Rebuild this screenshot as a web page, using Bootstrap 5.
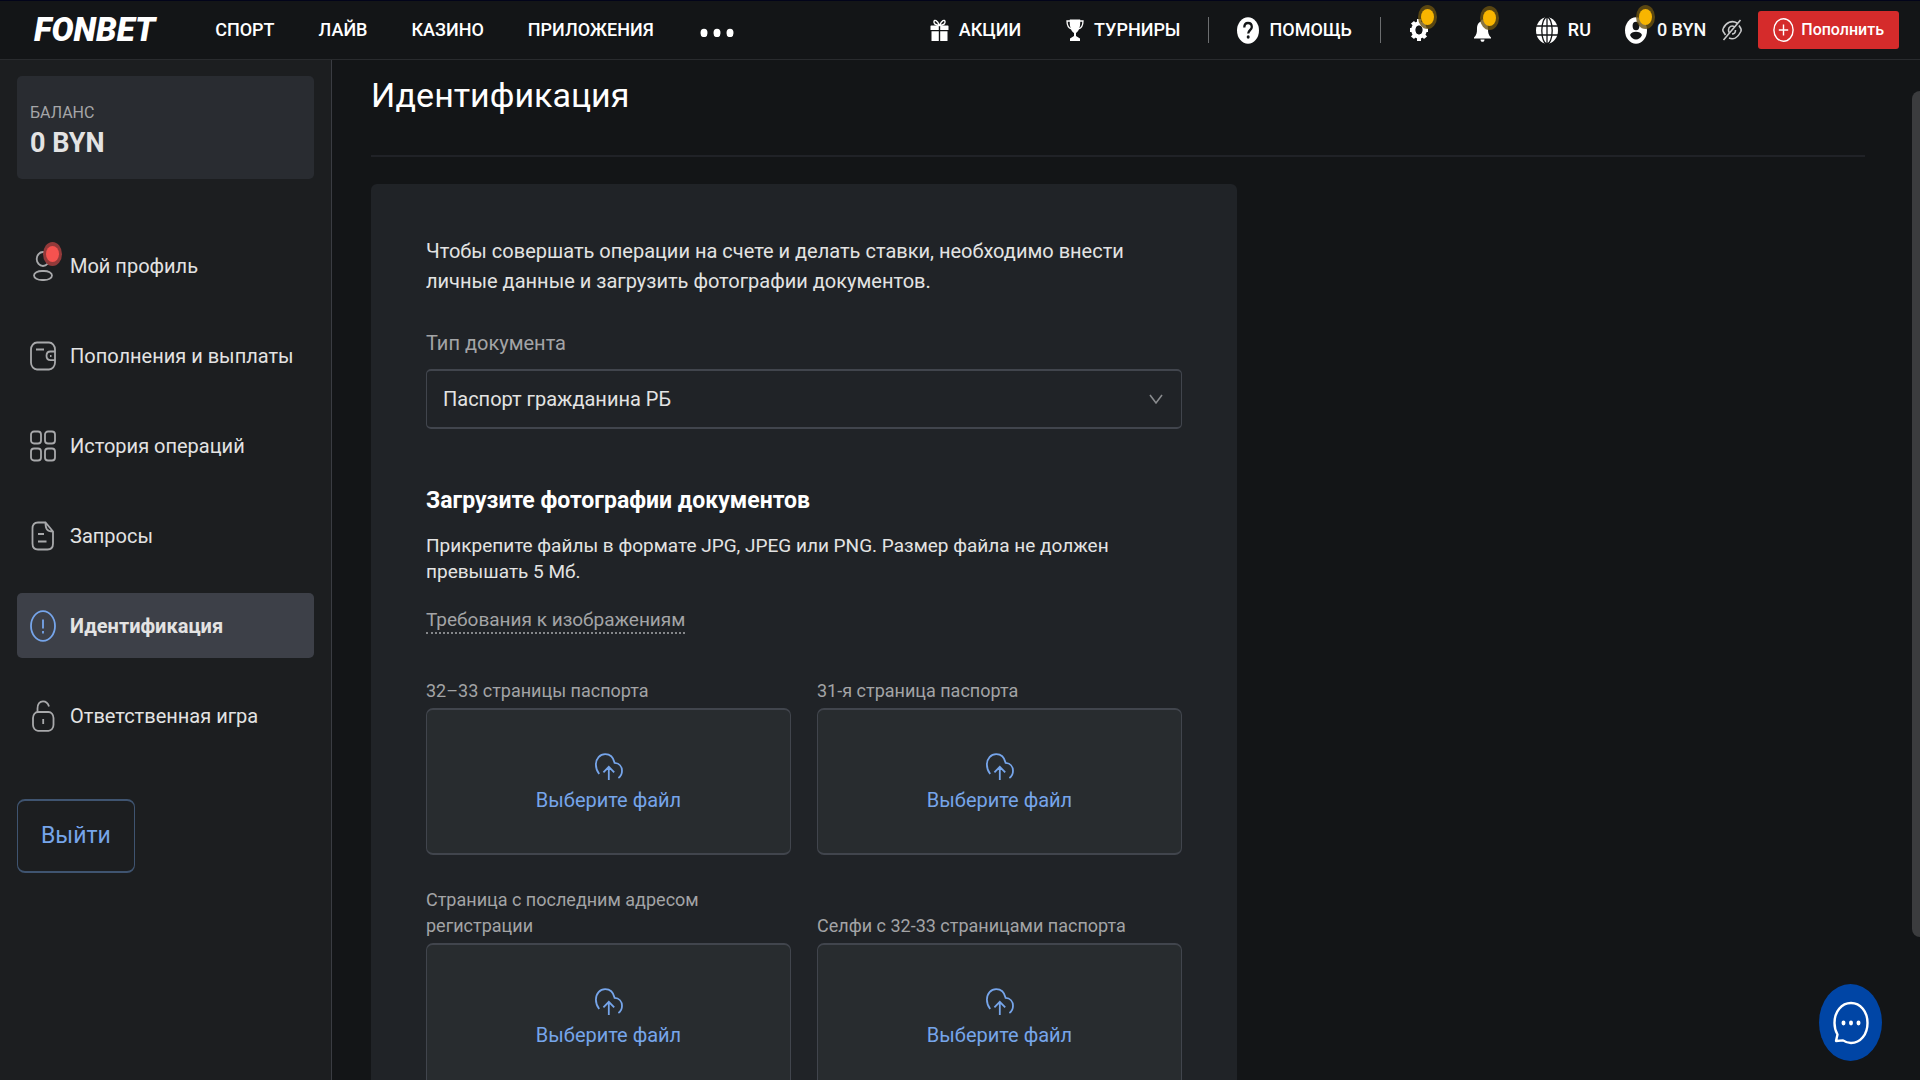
<!DOCTYPE html>
<html lang="ru" data-bs-theme="dark">
<head>
<meta charset="utf-8">
<meta name="viewport" content="width=device-width, initial-scale=1">
<title>Идентификация</title>
<link href="https://cdn.jsdelivr.net/npm/bootstrap@5.3.0/dist/css/bootstrap.min.css" rel="stylesheet">
<style>
body{font-family:Roboto,"Liberation Sans",sans-serif;background:#131517;color:#e3e3e3;font-size:20px;line-height:30px}
a{color:inherit;text-decoration:none}
svg{flex:none;display:block}
.topbar{height:60px;border-top:1px solid #02041a;border-bottom:1px solid #292b2e;background:#131517;color:#fff;font-size:18px;line-height:24px;font-weight:500;padding:0 21px 0 34px}
.brand{font-size:33px;line-height:36px;font-weight:900;font-style:italic;margin-right:60px}
.main-links{gap:44px}
.tool{gap:10px}
.plain{background:none;border:0;padding:0;color:inherit;font-weight:inherit}
.gap-wide{margin-left:45px}
.gap-mid{margin-left:28px}
.gap-user{margin-left:34px}
.vline{width:1px;height:26px;background:#6c6e70;margin-left:28px}
.notify{position:absolute;width:19px;height:24px;border-radius:50%;background:#6b5210cc;display:grid;place-items:center}
.notify::after{content:"";width:13px;height:16px;border-radius:50%;background:#f8b500}
.on-gear{left:9px;top:-13px}
.on-bell{left:6px;top:-12px}
.on-user{left:11px;top:-12px}
.notify-red{left:13px;top:-9px;background:#933a3a}
.notify-red::after{background:#f5524f}
.btn-pay{background:#d52b2b;color:#fff;border-radius:3px;font-size:16px;line-height:24px;font-weight:500;padding:7px 15px;gap:7px;border:0}
.btn-pay:hover{background:#c02424;color:#fff}
.side{width:332px;background:#1c1e20;border-right:1px solid #3a3c42;padding:16px 17px}
.balance{background:#292c31;border-radius:5px;height:103px;padding:24px 13px 0;margin-bottom:54px}
.balance-title{font-size:16px;line-height:26px;color:#a5a6a8}
.balance-sum{font-size:27px;line-height:34px;font-weight:700}
.side-links{gap:25px}
.side-link{height:65px;padding:0 13px;gap:14px;border-radius:5px;color:#e3e3e3;font-size:20px}
.side-link svg{color:#a8a9ab}
.side-link.active{background:#3d4048;font-weight:700}
.side-link.active svg{color:#76a5ea}
.btn-exit{margin-top:51px;height:74px;padding:0 23px;border:2px solid #3f5470;border-left-width:1px;border-right-width:1px;border-radius:8px;color:#76a5ea;font-size:23px}
.content-area{padding:15px 55px 0 39px}
.page-title{font-size:34px;line-height:40px;font-weight:400;padding-bottom:40px;margin-bottom:27px;border-bottom:2px solid #202227}
.panel{background:#202327;border-radius:6px;max-width:866px;padding:52px 55px}
.muted{color:#a3a4a6}
.doc-select{height:60px;background-color:transparent;border:2px solid #41454d;border-left-width:1px;border-right-width:1px;border-radius:5px;color:#e3e3e3;font-size:20px;padding:0 48px 0 16px;margin-top:11px;
background-image:url("data:image/svg+xml,%3Csvg xmlns='http://www.w3.org/2000/svg' viewBox='0 0 16 12' preserveAspectRatio='none'%3E%3Cpath d='M2 2l6 8 6-8' fill='none' stroke='%23898b8e' stroke-width='1.6'/%3E%3C/svg%3E");background-size:16px 12px;background-position:right 17px center}
.upload-title{font-size:23px;line-height:30px;font-weight:700;margin:57px 0 17px}
.note{font-size:19px;line-height:26px;margin-bottom:19px}
.req{font-size:19px;line-height:25px;border-bottom:2px dotted #85878a}
.uploads{--bs-gutter-x:26px;--bs-gutter-y:32px;margin-top:12px}
.up-label{font-size:18px;line-height:26px;margin-bottom:4px;max-width:320px}
.drop{height:147px;background:#282c2f;border:2px solid #41454d;border-left-width:1px;border-right-width:1px;border-radius:7px;color:#76a5ea;cursor:pointer;padding-top:4px}
.chat{position:fixed;right:38px;bottom:19px;width:63px;height:77px;border-radius:50%;border:0;background:#0045a5;color:#fff;padding:0}
.thumb{position:fixed;right:0;top:91px;width:8px;height:846px;border-radius:8px 0 0 8px;background:#3b3c3e}
</style>
</head>
<body class="vh-100 overflow-hidden d-flex flex-column">
<svg class="d-none" aria-hidden="true">
<symbol id="cloud" viewBox="0 0 28 28" preserveAspectRatio="none"><path d="M4.200 21C1.800 18 .9 14.500 .9 11.800 .9 5.500 5 1.200 10.200 1.200c4.800 0 8.200 3.400 9.400 8.600 4.400 .3 7.400 3.600 7.400 8 0 3.300-1.500 5.800-3.600 7.200M13.800 27V14.200M8.400 19.400l5.400-5.600 5.400 5.600" fill="none" stroke="currentColor" stroke-width="1.800"/></symbol>
</svg>
<header class="topbar d-flex align-items-center flex-shrink-0">
<a href="#" class="brand">FONBET</a>
<nav class="main-links d-flex align-items-center">
<a href="#">СПОРТ</a><a href="#">ЛАЙВ</a><a href="#">КАЗИНО</a><a href="#">ПРИЛОЖЕНИЯ</a>
<button class="plain" type="button" aria-label="Ещё"><svg width="36" height="14" viewBox="0 0 36 14" fill="#fff"><ellipse cx="6" cy="10" rx="3.500" ry="4.200"/><ellipse cx="19" cy="10" rx="3.500" ry="4.200"/><ellipse cx="32" cy="10" rx="3.500" ry="4.200"/></svg></button>
</nav>
<div class="d-flex align-items-center ms-auto">
<a href="#" class="tool d-flex align-items-center"><svg width="19" height="22" viewBox="0 0 19 22" fill="#fff"><path d="M1 6.500h7.800V11H.5V7zM10.200 6.500H18l.5.5v4h-8.300zM1.500 12.200h7.300V22h-7a.3.3 0 0 1-.3-.3zM10.200 12.200h7.300v9.500a.3.3 0 0 1-.3.3h-7z"/><path d="M9.500 6.500C7 1.200 4.500.3 4 2.500c-.4 2 1.200 3.700 5.500 4zM9.500 6.500C12 1.200 14.500.3 15 2.500c.4 2-1.200 3.700-5.500 4z" fill="none" stroke="#fff" stroke-width="1.400"/></svg>АКЦИИ</a>
<a href="#" class="tool gap-wide d-flex align-items-center"><svg width="18" height="22" viewBox="0 0 18 22" fill="#fff"><path d="M3.800 .5h10.400c.3 6-.5 11-4.200 13.500v3l4 2.500V22H4v-2.500L8 17v-3C4.300 11.500 3.500 6.500 3.800 .5z"/><path d="M4 2H1c0 4.500 1.500 7 4.500 8M14 2h3c0 4.500-1.500 7-4.500 8" fill="none" stroke="#fff" stroke-width="1.300"/></svg>ТУРНИРЫ</a>
<span class="vline"></span>
<a href="#" class="tool gap-mid d-flex align-items-center"><svg width="22" height="27" viewBox="0 0 22 27"><ellipse cx="11" cy="13.500" rx="11" ry="13.200" fill="#fff"/><path d="M7.300 10.500C7.300 7.500 8.800 6 11 6s3.800 1.600 3.800 4c0 3-3.600 3.400-3.600 6.600" fill="none" stroke="#131517" stroke-width="2.300"/><ellipse cx="11.200" cy="20" rx="1.500" ry="1.800" fill="#131517"/></svg>ПОМОЩЬ</a>
<span class="vline"></span>
<button class="plain gap-mid position-relative" type="button" aria-label="Настройки"><svg width="20" height="24" viewBox="0 0 20 24"><ellipse cx="10" cy="12" rx="5.600" ry="6.600" fill="none" stroke="#fff" stroke-width="4.400"/><path d="M10 1v5M10 18v5M1 12h4M15 12h4M3.500 4.200l3 3.600M13.500 16.200l3 3.600M16.500 4.200l-3 3.600M6.500 16.200l-3 3.600" stroke="#fff" stroke-width="4"/><ellipse cx="10" cy="12" rx="3.400" ry="4.200" fill="#131517"/></svg><span class="notify on-gear"></span></button>
<button class="plain gap-wide position-relative" type="button" aria-label="Уведомления"><svg width="17" height="24" viewBox="0 0 17 24" fill="#fff"><path d="M8.500 1.500c1 0 1.500.8 1.500 2 3.200 1.200 4 4 4 7.500 0 4 .5 6 3 8.500v1H0v-1C2.500 17 3 15 3 11c0-3.500 .8-6.300 4-7.500 0-1.200.5-2 1.500-2zM6.500 21.500h4c0 1.600-.8 2.300-2 2.300s-2-.7-2-2.300z"/></svg><span class="notify on-bell"></span></button>
<a href="#" class="tool gap-wide d-flex align-items-center"><svg width="22" height="27" viewBox="0 0 22 27"><ellipse cx="11" cy="13.500" rx="11" ry="13.200" fill="#fff"/><path d="M0 9h22M0 18h22M11 0v27" stroke="#131517" stroke-width="1.300"/><ellipse cx="11" cy="13.500" rx="5.200" ry="13.500" fill="none" stroke="#131517" stroke-width="1.300"/></svg>RU</a>
<a href="#" class="tool gap-user d-flex align-items-center position-relative"><svg width="22" height="27" viewBox="0 0 22 27"><ellipse cx="11" cy="13.500" rx="11" ry="13.200" fill="#fff"/><ellipse cx="11" cy="9" rx="3.400" ry="4.200" fill="#131517"/><path d="M5 18c1-2.400 3.200-3.200 6-3.200s5 .8 6 3.200c-1.200 3-3.400 4.400-6 4.400S6.200 21 5 18z" fill="#131517"/></svg><span class="notify on-user"></span><span class="text-light">0 BYN</span></a>
<button class="plain mx-3" type="button" aria-label="Скрыть баланс"><svg width="20" height="22" viewBox="0 0 20 22" fill="none" stroke="#c9cacb" stroke-width="1.600"><path d="M15 4C10 .8 4 3.500 1.200 9.500c-.5 1-.4 2 0 3L3.500 16M17 6.500l1.800 3c.5 1 .4 2 0 3C16 18.500 11.500 21 7 19M12.500 8C10 5.800 6.500 7.500 6.500 11c0 1.200.3 2 .8 2.700M13.500 11c0 2.500-1.500 4-3.500 4M18.500 1L1.500 21"/></svg></button>
<button class="btn btn-pay d-flex align-items-center" type="button"><svg width="21" height="24" viewBox="0 0 21 24" fill="none" stroke="#fff" stroke-width="1.400"><ellipse cx="10.500" cy="12" rx="9.600" ry="11.200"/><path d="M10.500 6.500v11M5.800 12h9.400"/></svg>Пополнить</button>
</div>
</header>
<div class="d-flex flex-grow-1 overflow-hidden">
<aside class="side flex-shrink-0">
<div class="balance"><div class="balance-title">БАЛАНС</div><div class="balance-sum">0 BYN</div></div>
<nav class="side-links d-flex flex-column">
<a href="#" class="side-link d-flex align-items-center"><span class="position-relative"><svg width="26" height="30" viewBox="0 0 26 30" fill="none" stroke="currentColor" stroke-width="1.800"><ellipse cx="13" cy="8" rx="6.300" ry="7"/><rect x="4" y="20" width="18" height="9" rx="8" ry="4.500"/></svg><span class="notify notify-red"></span></span>Мой профиль</a>
<a href="#" class="side-link d-flex align-items-center"><svg width="26" height="30" viewBox="0 0 26 30" fill="none" stroke="currentColor" stroke-width="1.800"><rect x="1" y="1.500" width="24" height="27" rx="6" ry="7"/><path d="M6 8.500h8M25 10.500h-4.500c-2.800 0-4 1.800-4 4.300s1.200 4.300 4 4.300H25"/><path d="M20 15h1.500"/></svg>Пополнения и выплаты</a>
<a href="#" class="side-link d-flex align-items-center"><svg width="26" height="32" viewBox="0 0 26 32" fill="none" stroke="currentColor" stroke-width="1.800"><rect x="1" y="1.500" width="10" height="12" rx="3"/><rect x="15" y="1.500" width="10" height="12" rx="3"/><rect x="1" y="18.500" width="10" height="12" rx="3"/><rect x="15" y="18.500" width="10" height="12" rx="3"/></svg>История операций</a>
<a href="#" class="side-link d-flex align-items-center"><svg width="26" height="30" viewBox="0 0 26 30" fill="none" stroke="currentColor" stroke-width="1.800"><path d="M15.500 1.500H8c-4 0-5.500 2-5.500 6v15c0 4 1.500 6 5.500 6h9.500c4 0 5.500-2 5.500-6V10.500zM15.500 1.500c0 6 1 9 7.500 9M8 13h6M8 20.500h8.500"/></svg>Запросы</a>
<a href="#" class="side-link active d-flex align-items-center" aria-current="page"><svg width="26" height="32" viewBox="0 0 26 32" fill="none" stroke="currentColor" stroke-width="1.800"><ellipse cx="13" cy="16" rx="12" ry="14.800"/><path d="M13 9.500v9M13 21v2.500"/></svg>Идентификация</a>
<a href="#" class="side-link d-flex align-items-center"><svg width="26" height="32" viewBox="0 0 26 32" fill="none" stroke="currentColor" stroke-width="1.800"><rect x="3" y="12" width="20.500" height="18.800" rx="5" ry="6"/><path d="M7.500 12V8.500C7.500 4 9.500 1.300 13 1.300c3 0 5 1.700 6 5.200M13.200 19v5"/></svg>Ответственная игра</a>
</nav>
<button class="btn btn-exit" type="button">Выйти</button>
</aside>
<main class="content-area flex-grow-1">
<h1 class="page-title">Идентификация</h1>
<form class="panel">
<p class="mb-0 pb-1">Чтобы совершать операции на счете и делать ставки, необходимо внести личные данные и загрузить фотографии документов.</p>
<label for="docType" class="muted d-block pt-4 mt-1">Тип документа</label>
<select id="docType" class="form-select doc-select"><option>Паспорт гражданина РБ</option></select>
<h2 class="upload-title">Загрузите фотографии документов</h2>
<p class="note">Прикрепите файлы в формате JPG, JPEG или PNG. Размер файла не должен превышать 5 Мб.</p>
<a href="#" class="req muted d-inline-block">Требования к изображениям</a>
<div class="row uploads align-items-end">
<div class="col-6"><label for="f1" class="up-label muted d-block">32–33 страницы паспорта</label><label for="f1" class="drop d-flex flex-column align-items-center justify-content-center gap-1"><svg width="28" height="28"><use href="#cloud"/></svg><span>Выберите файл</span></label><input id="f1" type="file" class="visually-hidden"></div>
<div class="col-6"><label for="f2" class="up-label muted d-block">31-я страница паспорта</label><label for="f2" class="drop d-flex flex-column align-items-center justify-content-center gap-1"><svg width="28" height="28"><use href="#cloud"/></svg><span>Выберите файл</span></label><input id="f2" type="file" class="visually-hidden"></div>
<div class="col-6"><label for="f3" class="up-label muted d-block">Страница с последним адресом регистрации</label><label for="f3" class="drop d-flex flex-column align-items-center justify-content-center gap-1"><svg width="28" height="28"><use href="#cloud"/></svg><span>Выберите файл</span></label><input id="f3" type="file" class="visually-hidden"></div>
<div class="col-6"><label for="f4" class="up-label muted d-block">Селфи с 32-33 страницами паспорта</label><label for="f4" class="drop d-flex flex-column align-items-center justify-content-center gap-1"><svg width="28" height="28"><use href="#cloud"/></svg><span>Выберите файл</span></label><input id="f4" type="file" class="visually-hidden"></div>
</div>
</form>
</main>
</div>
<div class="thumb" aria-hidden="true"></div>
<button class="chat" type="button" aria-label="Чат"><svg class="mx-auto" width="36" height="44" viewBox="0 0 36 44"><path d="M4.500 33.500C2.400 30 1.500 26 1.500 22 1.500 10.500 8.500 2 18 2s16.500 8.500 16.500 20S27.500 42 18 42c-3 0-5.500-.8-8-2.600L3 40z" fill="none" stroke="#fff" stroke-width="2.400" stroke-linejoin="round"/><ellipse cx="10.500" cy="22" rx="2" ry="2.400" fill="#fff"/><ellipse cx="18" cy="22" rx="2" ry="2.400" fill="#fff"/><ellipse cx="25.500" cy="22" rx="2" ry="2.400" fill="#fff"/></svg></button>
<script src="https://cdn.jsdelivr.net/npm/bootstrap@5.3.0/dist/js/bootstrap.bundle.min.js"></script>
</body>
</html>
